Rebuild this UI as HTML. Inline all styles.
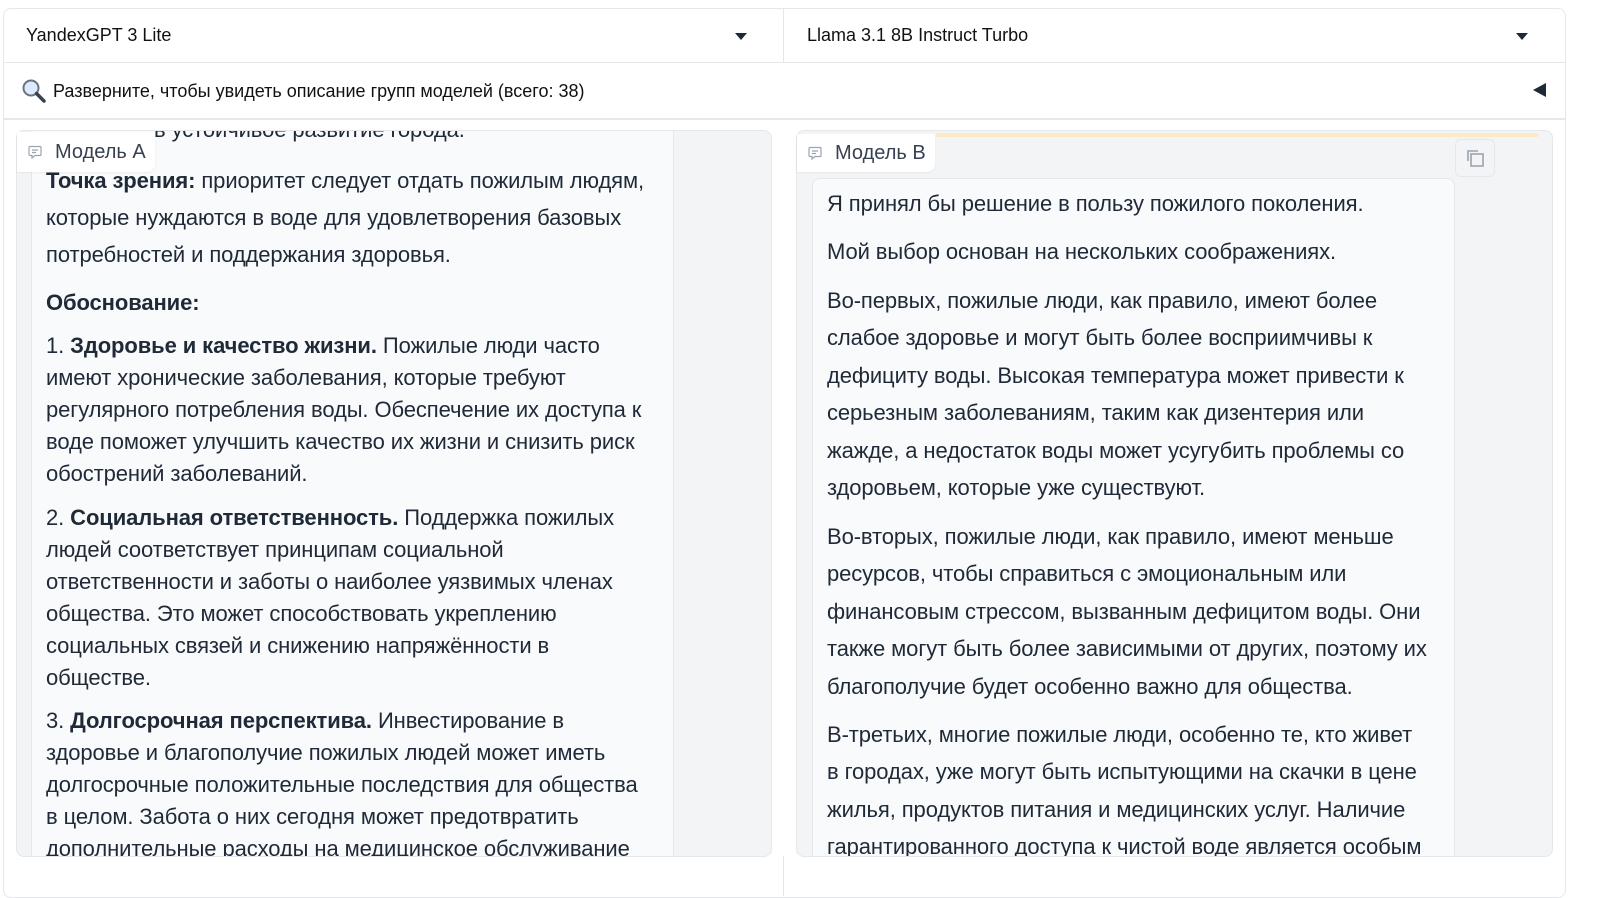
<!DOCTYPE html>
<html><head><meta charset="utf-8"><style>
*{box-sizing:border-box;margin:0;padding:0}
body{width:1600px;height:890px;background:#fff;font-family:"Liberation Sans","DejaVu Sans",sans-serif;color:#1f2937;position:relative;overflow:hidden}
.abs{position:absolute}
.box{position:absolute;border:1px solid #e5e7eb}
.l{position:absolute;white-space:nowrap;font-size:22px;line-height:26px;letter-spacing:-0.1px}
b{font-weight:bold}
.tab{position:absolute;background:#fff;border-radius:0 0 8px 0;font-size:20px;color:#374151;display:flex;align-items:center;padding-left:10px;box-shadow:0 1px 2px rgba(0,0,0,.06)}
.tab svg{margin-right:12px}
</style></head><body>
<div class="box" style="left:3px;top:8px;width:1563px;height:890px;border-radius:8px"></div>
<div class="abs" style="left:783px;top:8px;width:1px;height:55px;background:#e5e7eb"></div>
<div class="abs" style="left:783px;top:856px;width:1px;height:40px;background:#e5e7eb"></div>
<div class="abs" style="left:3px;top:62px;width:1563px;height:1px;background:#e5e7eb"></div>
<div class="abs" style="left:3px;top:118px;width:1563px;height:2px;background:#e5e7eb"></div>
<div class="abs" style="left:26px;top:25px;font-size:18px;color:#111">YandexGPT 3 Lite</div>
<div class="abs" style="left:807px;top:25px;font-size:18px;color:#111">Llama 3.1 8B Instruct Turbo</div>
<div class="abs" style="left:735px;top:33px;border-left:6px solid transparent;border-right:6px solid transparent;border-top:7px solid #1f2937"></div>
<div class="abs" style="left:1516px;top:33px;border-left:6px solid transparent;border-right:6px solid transparent;border-top:7px solid #1f2937"></div>
<svg class="abs" style="left:21px;top:78px" width="26" height="26" viewBox="0 0 26 26"><circle cx="10" cy="10" r="7.5" fill="#dbeafe" stroke="#6b7280" stroke-width="2"/><line x1="15.5" y1="15.5" x2="23" y2="23" stroke="#374151" stroke-width="3.5" stroke-linecap="round"/></svg>
<div class="abs" style="left:53px;top:81px;font-size:18px;color:#111">Разверните, чтобы увидеть описание групп моделей (всего: 38)</div>
<div class="abs" style="left:1533px;top:83px;border-top:7px solid transparent;border-bottom:7px solid transparent;border-right:13px solid #1f2937"></div>

<!-- left panel -->
<div class="box" style="left:16px;top:130px;width:756px;height:727px;border-radius:8px;background:#f3f4f6;overflow:hidden">
 <div class="abs" style="left:14px;top:-10px;width:643px;height:740px;background:#f9fafb;border-left:1px solid #e5e7eb;border-right:1px solid #e5e7eb"></div>
 <div style="position:absolute;left:29px;top:2px;">
  <div class="l" style="top:-16px;left:108px">в устойчивое развитие города.</div>
  <div class="l" style="top:35px"><b>Точка зрения:</b> приоритет следует отдать пожилым людям,</div>
  <div class="l" style="top:72px">которые нуждаются в воде для удовлетворения базовых</div>
  <div class="l" style="top:109px">потребностей и поддержания здоровья.</div>
  <div class="l" style="top:157px"><b>Обоснование:</b></div>
  <div class="l" style="top:200px">1. <b>Здоровье и качество жизни.</b> Пожилые люди часто</div>
  <div class="l" style="top:232px">имеют хронические заболевания, которые требуют</div>
  <div class="l" style="top:264px">регулярного потребления воды. Обеспечение их доступа к</div>
  <div class="l" style="top:296px">воде поможет улучшить качество их жизни и снизить риск</div>
  <div class="l" style="top:328px">обострений заболеваний.</div>
  <div class="l" style="top:372px">2. <b>Социальная ответственность.</b> Поддержка пожилых</div>
  <div class="l" style="top:404px">людей соответствует принципам социальной</div>
  <div class="l" style="top:436px">ответственности и заботы о наиболее уязвимых членах</div>
  <div class="l" style="top:468px">общества. Это может способствовать укреплению</div>
  <div class="l" style="top:500px">социальных связей и снижению напряжённости в</div>
  <div class="l" style="top:532px">обществе.</div>
  <div class="l" style="top:575px">3. <b>Долгосрочная перспектива.</b> Инвестирование в</div>
  <div class="l" style="top:607px">здоровье и благополучие пожилых людей может иметь</div>
  <div class="l" style="top:639px">долгосрочные положительные последствия для общества</div>
  <div class="l" style="top:671px">в целом. Забота о них сегодня может предотвратить</div>
  <div class="l" style="top:703px">дополнительные расходы на медицинское обслуживание</div>
 </div>
</div>
<div class="tab" style="left:17px;top:132px;width:138px;height:40px"><svg width="16" height="16" viewBox="0 0 16 16"><path d="M3 2.5h10a1 1 0 0 1 1 1v7a1 1 0 0 1-1 1H8l-3 2.5v-2.5H3a1 1 0 0 1-1-1v-7a1 1 0 0 1 1-1z" fill="none" stroke="#9ca3af" stroke-width="1.2"/><path d="M5 6h6M5 8.5h4" stroke="#9ca3af" stroke-width="1.2"/></svg>Модель A</div>

<!-- right panel -->
<div class="box" style="left:796px;top:130px;width:757px;height:727px;border-radius:8px;background:#f3f4f6;overflow:hidden">
 <div class="abs" style="left:139px;top:2px;width:602px;height:4px;background:#fde9c8"></div>
 <div class="abs" style="left:658px;top:8px;width:40px;height:38px;border:1px solid #e5e7eb;border-radius:6px;background:#f3f4f6"></div>
 <svg class="abs" style="left:667px;top:16px" width="22" height="22" viewBox="0 0 22 22"><path d="M4 14V4h10" fill="none" stroke="#9ca3af" stroke-width="1.6"/><rect x="7" y="7" width="12" height="12" fill="none" stroke="#9ca3af" stroke-width="1.6"/></svg>
 <div class="abs" style="left:15px;top:47px;width:643px;height:700px;background:#f9fafb;border:1px solid #e5e7eb;border-radius:8px"></div>
 <div style="position:absolute;left:30px;top:2px;">
  <div class="l" style="top:58px">Я принял бы решение в пользу пожилого поколения.</div>
  <div class="l" style="top:106px">Мой выбор основан на нескольких соображениях.</div>
  <div class="l" style="top:155px">Во-первых, пожилые люди, как правило, имеют более</div>
  <div class="l" style="top:192px">слабое здоровье и могут быть более восприимчивы к</div>
  <div class="l" style="top:230px">дефициту воды. Высокая температура может привести к</div>
  <div class="l" style="top:267px">серьезным заболеваниям, таким как дизентерия или</div>
  <div class="l" style="top:305px">жажде, а недостаток воды может усугубить проблемы со</div>
  <div class="l" style="top:342px">здоровьем, которые уже существуют.</div>
  <div class="l" style="top:391px">Во-вторых, пожилые люди, как правило, имеют меньше</div>
  <div class="l" style="top:428px">ресурсов, чтобы справиться с эмоциональным или</div>
  <div class="l" style="top:466px">финансовым стрессом, вызванным дефицитом воды. Они</div>
  <div class="l" style="top:503px">также могут быть более зависимыми от других, поэтому их</div>
  <div class="l" style="top:541px">благополучие будет особенно важно для общества.</div>
  <div class="l" style="top:589px">В-третьих, многие пожилые люди, особенно те, кто живет</div>
  <div class="l" style="top:626px">в городах, уже могут быть испытующими на скачки в цене</div>
  <div class="l" style="top:664px">жилья, продуктов питания и медицинских услуг. Наличие</div>
  <div class="l" style="top:701px">гарантированного доступа к чистой воде является особым</div>
 </div>
</div>
<div class="tab" style="left:797px;top:134px;width:138px;height:38px"><svg width="16" height="16" viewBox="0 0 16 16"><path d="M3 2.5h10a1 1 0 0 1 1 1v7a1 1 0 0 1-1 1H8l-3 2.5v-2.5H3a1 1 0 0 1-1-1v-7a1 1 0 0 1 1-1z" fill="none" stroke="#9ca3af" stroke-width="1.2"/><path d="M5 6h6M5 8.5h4" stroke="#9ca3af" stroke-width="1.2"/></svg>Модель B</div>
</body></html>
